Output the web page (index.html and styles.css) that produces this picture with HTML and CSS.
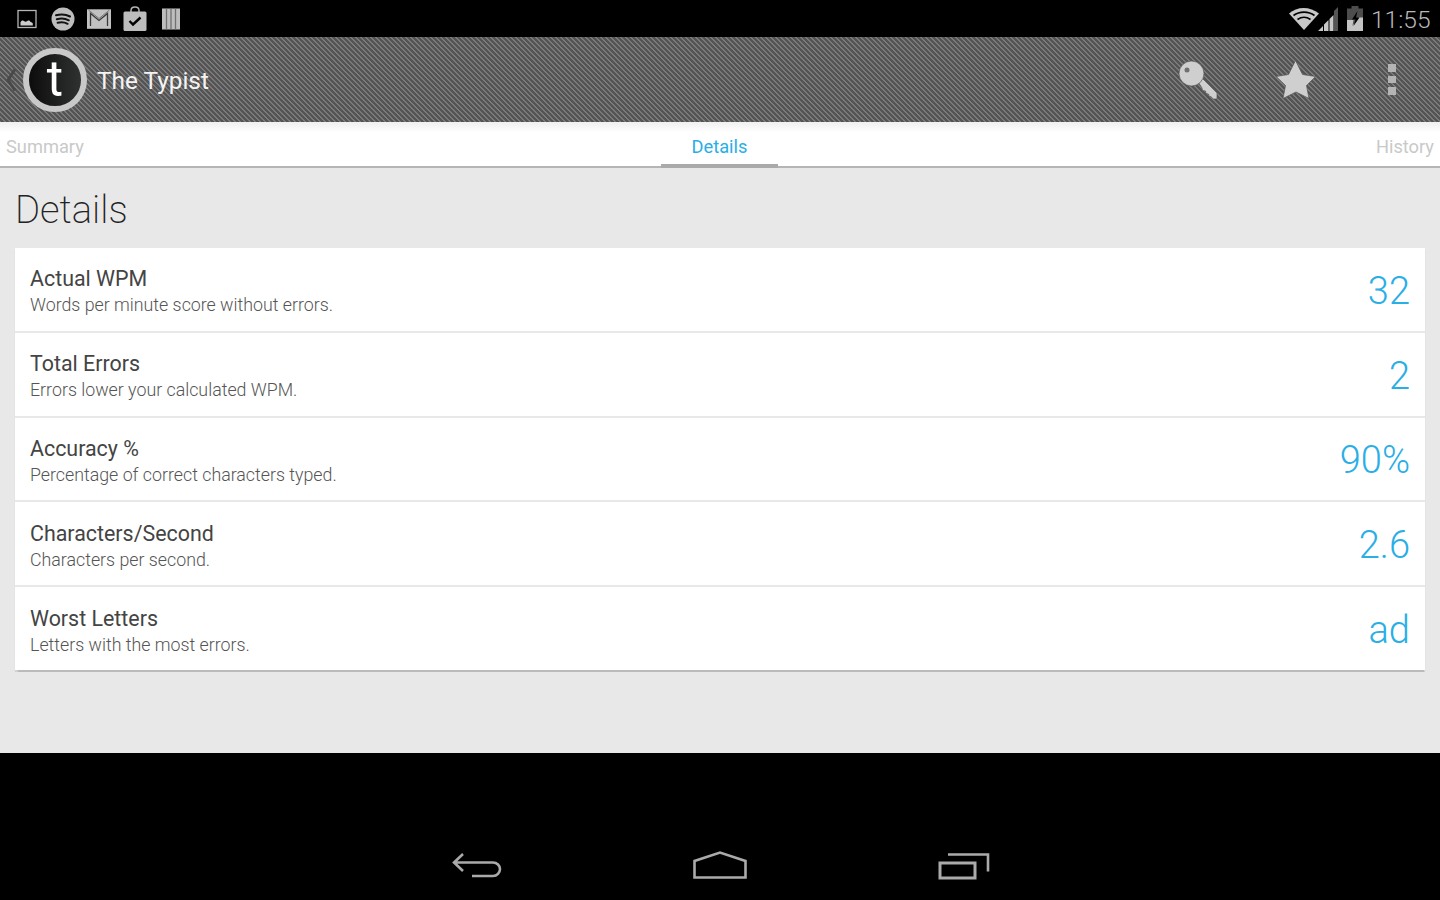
FILE: index.html
```html
<!DOCTYPE html>
<html lang="en">
<head>
<meta charset="utf-8">
<title>The Typist</title>
<link rel="stylesheet" href="styles.css">
</head>
<body>
<div class="status">
  <div class="status-left">
    <svg width="20" height="20" viewBox="0 0 20 20"><rect x="1" y="1.500" width="18" height="17" fill="none" stroke="#b5b5b5" stroke-width="1.300"/><path d="M3.500 16.500v-3.200c1-2 2.500-2.200 3.800-1 1.200.8 2 .4 3-.3 1.500-1 2.500-.4 3 .7l1 .5c1 .2 1.500 1 1.500 1.500v1.800z" fill="#ccc"/></svg>
    <svg class="ic-spotify" width="24" height="24" viewBox="0 0 24 24"><circle cx="12" cy="12" r="11.500" fill="#bdbdbd"/><path d="M5 8.300c5-1.300 10-.9 14 1.200M5.800 12.200c4.300-1.100 8.600-.7 12 1.100M6.600 15.800c3.600-.8 7.200-.5 10 1" fill="none" stroke="#111" stroke-width="2" stroke-linecap="round"/></svg>
    <svg width="24" height="20" viewBox="0 0 24 20"><rect width="24" height="19.500" y=".3" fill="#c2c2c2"/><path d="M3.500 17V4.500L12 11.500 20.500 4.500V17" fill="none" stroke="#3a3a3a" stroke-width="1.300"/><path d="M1.500 1 12 9.500 22.500 1" fill="none" stroke="#777" stroke-width="1"/></svg>
    <svg width="24" height="26" viewBox="0 0 24 26"><path d="M8 7V4.500C8 2 10 1 12 1s4 1 4 3.500V7" fill="none" stroke="#b5b5b5" stroke-width="1.500"/><rect x=".5" y="5.500" width="23" height="19.500" rx="1.500" fill="#bdbdbd"/><path d="M6.500 15l3.500 3.500 7.500-7" fill="none" stroke="#000" stroke-width="2.400"/></svg>
    <svg class="ic-bars" width="18" height="22" viewBox="0 0 18 22"><rect y=".5" width="18" height="21" fill="#bdbdbd"/><path d="M4.500 .5v21M9 .5v21M13.500 .5v21" stroke="#707070" stroke-width="1.300"/></svg>
  </div>
  <div class="status-right">
    <svg width="30" height="23" viewBox="0 0 30 23"><path d="M0 6.500C8-1 21-1 30 6.500L15 23z" fill="#c8c8c8"/><path d="M4.500 8.500c6-4.500 15-4.500 21 0M8.500 12.500c4-2.800 9-2.800 13 0" fill="none" stroke="#000" stroke-width="1.600"/></svg>
    <svg class="signal" width="20" height="24" viewBox="0 0 20 24"><path d="M20 0v24H16V4z" fill="#555"/><path d="M0 24 5 19V24zM6 24v-6.500l4.500-4.500V24zM11.500 24V12l4-4V24z" fill="#c8c8c8"/></svg>
    <svg class="battery" width="18" height="25" viewBox="0 0 18 25"><path d="M5.500 0h7v2.500H17V25H1V2.500h4.500z" fill="#4d4d4d"/><path d="M1 14h6.500l-1 6 6-8.500H17V25H1z" fill="#c4c4c4"/><path d="M11.500 5 6 13.500h3.500L7.500 20l6-8.500H10z" fill="#000"/></svg>
    <span class="clock">11:55</span>
  </div>
</div>

<header class="actionbar">
  <div class="brand">
    <svg class="chevron" width="12" height="24" viewBox="0 0 12 24"><path d="M10 1.500 3 12l7 10.500" fill="none" stroke="#484848" stroke-width="2.800"/></svg>
    <div class="logo"><span class="logo-t">t</span></div>
    <span class="app-title">The Typist</span>
  </div>
  <div class="actions">
    <svg width="40" height="40" viewBox="0 0 40 40"><path d="M19.500 21 24 18 39 33v6h-4l-2-2.500-1.500.5-1-3-2.500-.5-.5-2.500-3-.5-.5-2.500z" fill="#cfcfcf" stroke="#555" stroke-width=".7"/><circle cx="13.500" cy="13.500" r="12.500" fill="#cfcfcf" stroke="#555" stroke-width=".7"/><circle cx="9" cy="10" r="2.500" fill="#707070"/></svg>
    <svg class="action-star" width="40" height="40" viewBox="0 0 40 40"><path d="M19.500 .5 26.500 14.500 39.500 16.500 30.500 25.500 33 38.500 20 32 7 38.500 9.500 25.500 .2 16.500 12.500 14.500z" fill="#cfcfcf" stroke="#555" stroke-width=".7"/></svg>
    <div class="overflow"><i></i><i></i><i></i></div>
  </div>
</header>

<nav class="tabs">
  <span class="tab tab-side">Summary</span>
  <span class="tab tab-active">Details</span>
  <span class="tab tab-side">History</span>
</nav>

<main class="content">
  <h1 class="heading">Details</h1>
  <section class="card">
    <div class="row"><div class="labels"><div class="label">Actual WPM</div><div class="desc">Words per minute score without errors.</div></div><div class="value">32</div></div>
    <div class="row"><div class="labels"><div class="label">Total Errors</div><div class="desc">Errors lower your calculated WPM.</div></div><div class="value">2</div></div>
    <div class="row"><div class="labels"><div class="label">Accuracy %</div><div class="desc">Percentage of correct characters typed.</div></div><div class="value">90%</div></div>
    <div class="row"><div class="labels"><div class="label">Characters/Second</div><div class="desc">Characters per second.</div></div><div class="value">2.6</div></div>
    <div class="row"><div class="labels"><div class="label">Worst Letters</div><div class="desc">Letters with the most errors.</div></div><div class="value">ad</div></div>
  </section>
</main>

<footer class="navbar">
  <svg width="50" height="28" viewBox="0 0 50 28"><path d="M11 2 2 10.500 11 19M3 10.500h38c4 0 7 3 7 6.500s-3 7-7 7H20" fill="none" stroke="#aaa" stroke-width="2.600"/></svg>
  <svg class="nav-home" width="54" height="28" viewBox="0 0 54 28"><path d="M1.500 26.500V10L27 1.500 52.500 10v16.500z" fill="none" stroke="#aaa" stroke-width="2.600"/></svg>
  <svg width="52" height="28" viewBox="0 0 52 28"><path d="M10 2.500h40v17" fill="none" stroke="#aaa" stroke-width="2.600"/><rect x="2" y="11" width="35" height="15" fill="none" stroke="#aaa" stroke-width="3"/></svg>
</footer>
</body>
</html>
```

FILE: styles.css
```css
* { box-sizing: border-box; }
html, body { margin: 0; padding: 0; }
body {
  width: 1440px;
  height: 900px;
  overflow: hidden;
  display: flex;
  flex-direction: column;
  font-family: Roboto, "Liberation Sans", sans-serif;
  background: #000;
}
.status {
  height: 37px;
  flex: none;
  background: #000;
  display: flex;
  justify-content: space-between;
  align-items: center;
  padding: 0 9px 0 17px;
}
.status-left { display: flex; align-items: center; gap: 12px; }
.ic-spotify { margin-left: 2px; }
.ic-bars { margin-left: 3px; }
.status-right { display: flex; align-items: center; }
.signal { margin-left: -1px; }
.battery { margin-left: 8px; }
.clock {
  margin: 1px 1px 0 7px;
  width: 59px;
  color: #b8b8b8;
  font-size: 24.500px;
  font-weight: 300;
}
.actionbar {
  height: 85px;
  flex: none;
  display: flex;
  justify-content: space-between;
  align-items: center;
  padding: 0 44px 0 5px;
  background-color: #6a6a6a;
  background-image: linear-gradient(45deg,
    #7a7a7a 0 20%, #545454 20% 50%, #7a7a7a 50% 70%, #545454 70% 100%);
  background-size: 5px 5px;
}
.brand { display: flex; align-items: center; }
.chevron { margin-right: 6px; }
.logo {
  width: 64px;
  height: 64px;
  border-radius: 50%;
  border: 6.500px solid #c9c9c9;
  background: linear-gradient(90deg, #0c0c0c, #2e322f);
  display: flex;
  align-items: center;
  justify-content: center;
}
.logo-t { color: #fff; font-size: 50px; line-height: 1; margin-top: -2px; }
.app-title { margin: 1px 0 0 10px; color: #f4f4f4; font-size: 24.400px; }
.actions { display: flex; align-items: center; }
.action-star { margin-left: 58px; }
.overflow {
  margin-left: 72px;
  width: 8px;
  display: flex;
  flex-direction: column;
  gap: 4px;
}
.overflow i { display: block; height: 7.500px; background: #b4b4b4; }
.tabs {
  height: 46px;
  flex: none;
  background: linear-gradient(#f0f0f0, #fff 10px);
  border-bottom: 2px solid #b5b5b5;
  display: flex;
  justify-content: space-between;
  padding: 0 6px;
  position: relative;
  font-size: 18.250px;
}
.tab { padding-top: 14px; line-height: 21px; }
.tab-side { color: #c9c9c9; }
.tab-active {
  position: absolute;
  left: 661px;
  width: 117px;
  height: 46px;
  text-align: center;
  color: #29aee6;
  border-bottom: 4px solid #aaa;
}
.content {
  flex: 1;
  background: #e8e8e8;
  padding: 0 15px;
}
.heading {
  margin: 0;
  padding-top: 19px;
  height: 80px;
  font-size: 38.300px;
  line-height: 46px;
  font-weight: 200;
  color: #222;
}
.card {
  background: #fff;
  box-shadow: 0 1.500px 1px #bbb;
}
.row {
  height: 84.750px;
  padding: 0 15px;
  display: flex;
  justify-content: space-between;
  align-items: center;
  border-bottom: 2px solid #e8e8e8;
}
.row:last-child { height: 83px; border-bottom: 0; }
.labels { margin-top: 4px; }
.label { font-size: 21.400px; line-height: 27px; color: #444; }
.desc { font-size: 17.800px; font-weight: 300; line-height: 25px; color: #555; }
.value { margin-top: 3px; font-size: 38px; font-weight: 300; color: #29aee6; }
.navbar {
  height: 147px;
  flex: none;
  background: #000;
  display: flex;
  align-items: flex-end;
  padding: 0 450px 20px 452px;
  justify-content: space-between;
}
.nav-home { margin-bottom: 1px; }
```
